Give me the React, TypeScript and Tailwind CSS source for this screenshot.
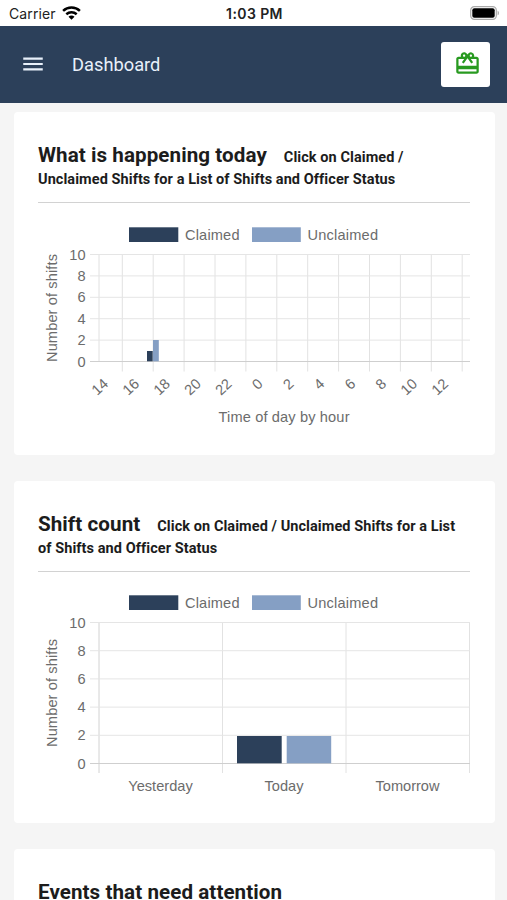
import type { ReactNode } from 'react';
import { MdCardGiftcard, MdMenu } from 'react-icons/md';

const NAVY = '#2c405a';
const BLUE = '#859fc4';
const LABELS = [10, 8, 6, 4, 2, 0];
const HOURS = ['14', '16', '18', '20', '22', '0', '2', '4', '6', '8', '10', '12'];
const DAYS = ['Yesterday', 'Today', 'Tomorrow'];

function StatusBar() {
  return (
    <div className="grid h-[26px] shrink-0 grid-cols-3 items-center bg-white pl-[9px] pr-[7px] text-[#222]">
      <div className="flex items-center gap-[6px] font-['Inter','Liberation_Sans',sans-serif] text-[14px] tracking-[0.1px]">
        <span>Carrier</span>
        <svg width="19" height="14" viewBox="0 0 19 14" fill="none" stroke="#000" strokeWidth="2.5">
          <path d="M1.1 4.9C5.8.5 13.2.5 17.9 4.9" />
          <path d="M4.3 8.2c3-2.6 7.4-2.6 10.4 0" />
          <path d="M9.5 13.7 6.5 10.7c1.7-1.6 4.3-1.6 6 0Z" fill="#000" stroke="none" />
        </svg>
      </div>
      <div className="whitespace-nowrap text-center font-['Inter','Liberation_Sans',sans-serif] text-[14px] font-semibold tracking-[0.4px]">1:03 PM</div>
      <div className="flex justify-end">
        <svg width="30" height="14" viewBox="0 0 30 14">
          <rect x="0.7" y="0.7" width="25.6" height="12.6" rx="3.6" fill="#fff" stroke="#aaa" strokeWidth="1.2" />
          <rect x="2.3" y="2.3" width="22.4" height="9.4" rx="2" fill="#000" />
          <path d="M27.6 4.7v4.6c1.8-.7 1.8-3.9 0-4.6Z" fill="#aaa" />
        </svg>
      </div>
    </div>
  );
}

function AppBar() {
  return (
    <header className="flex h-[77px] shrink-0 items-center bg-[#2c405a] pl-5 pr-[17px] text-[#e8f0fa]">
      <MdMenu size={26} className="mb-[2px]" />
      <h1 className="ml-[26px] text-[18.3px] leading-6">Dashboard</h1>
      <button className="ml-auto flex h-[45px] w-[49px] items-center justify-center rounded-[3px] bg-white pb-[3px] pl-[3px] text-[#289a20]">
        <MdCardGiftcard size={27} />
      </button>
    </header>
  );
}

function Card({ title, hint, className, children }: { title: string; hint?: string; className: string; children?: ReactNode }) {
  return (
    <section className={`shrink-0 rounded-[4px] bg-white px-[24.5px] pt-8 ${className}`}>
      <h2 className="text-[14.5px] font-bold leading-[22px] tracking-[0.07px] text-[#1c1c1c]">
        <span className="mr-[17px] text-[20.6px]">{title}</span>
        {hint}
      </h2>
      {children}
    </section>
  );
}

function Legend() {
  return (
    <g>
      <rect x="91" y="24.3" width="49.3" height="14.7" fill={NAVY} />
      <text x="147" y="36.5" textLength="54.5">Claimed</text>
      <rect x="214" y="24.3" width="48.8" height="14.7" fill={BLUE} />
      <text x="269.5" y="36.5" textLength="70.5">Unclaimed</text>
    </g>
  );
}

function ValueAxis({ step, titleEnd }: { step: number; titleEnd: number }) {
  return (
    <g>
      {LABELS.map((label, i) => (
        <g key={label}>
          <path d={`M52 ${51.5 + i * step}H432`} stroke={label === 0 ? '#cfcfcf' : '#e5e5e5'} />
          <text x="47.5" y={56.5 + i * step} textAnchor="end">{label}</text>
        </g>
      ))}
      <text transform={`translate(19 ${titleEnd}) rotate(-90)`} textLength="108">Number of shifts</text>
    </g>
  );
}

const chartClass = "block font-['Liberation_Sans',Arial,sans-serif] text-[14.6px] fill-[#6c6c6c]";

function HourChart() {
  return (
    <svg width="432" height="230" viewBox="0 0 432 230" className={chartClass}>
      <Legend />
      <path d="M61 51V158.5" stroke="#e0e0e0" />
      {HOURS.map((hour, i) => (
        <g key={hour}>
          <path d={`M${84.3 + i * 30.9} 51V168.5`} stroke="#e2e2e2" />
          <text transform={`translate(${71.2 + i * 30.9} 182) rotate(-43)`} textAnchor="end">{hour}</text>
        </g>
      ))}
      <ValueAxis step={21.4} titleEnd={159} />
      <rect x="109" y="148" width="5.7" height="10.3" fill={NAVY} />
      <rect x="115" y="137" width="5.8" height="21.3" fill={BLUE} />
      <text x="180.5" y="218.5" textLength="131">Time of day by hour</text>
    </svg>
  );
}

function DayChart() {
  return (
    <svg width="432" height="230" viewBox="0 1 432 230" className={chartClass}>
      <Legend />
      {[61, 184.5, 308, 431.5].map((x) => (
        <path key={x} d={`M${x} 51V202`} stroke={x === 61 ? '#d2d2d2' : '#e2e2e2'} />
      ))}
      <ValueAxis step={28.2} titleEnd={176} />
      <rect x="199" y="165" width="44.7" height="27.3" fill={NAVY} />
      <rect x="248.7" y="165" width="44.5" height="27.3" fill={BLUE} />
      {DAYS.map((day, i) => (
        <text key={day} x={122.5 + i * 123.5} y="220" textAnchor="middle">{day}</text>
      ))}
    </svg>
  );
}

export default function App() {
  return (
    <div className="flex h-[900px] w-[507px] flex-col overflow-hidden bg-[#f5f5f5] font-['Roboto',sans-serif]">
      <StatusBar />
      <AppBar />
      <main className="flex flex-col gap-[26px] pl-[13.5px] pr-[12.5px] pt-[9px]">
        <Card title="What is happening today" hint="Click on Claimed / Unclaimed Shifts for a List of Shifts and Officer Status" className="h-[343px]">
          <hr className="mt-[11px] border-t border-[#d2d2d2]" />
          <HourChart />
        </Card>
        <Card title="Shift count" hint="Click on Claimed / Unclaimed Shifts for a List of Shifts and Officer Status" className="h-[342px]">
          <hr className="mt-[11px] border-t border-[#d2d2d2]" />
          <DayChart />
        </Card>
        <Card title="Events that need attention" className="h-[100px]" />
      </main>
    </div>
  );
}
